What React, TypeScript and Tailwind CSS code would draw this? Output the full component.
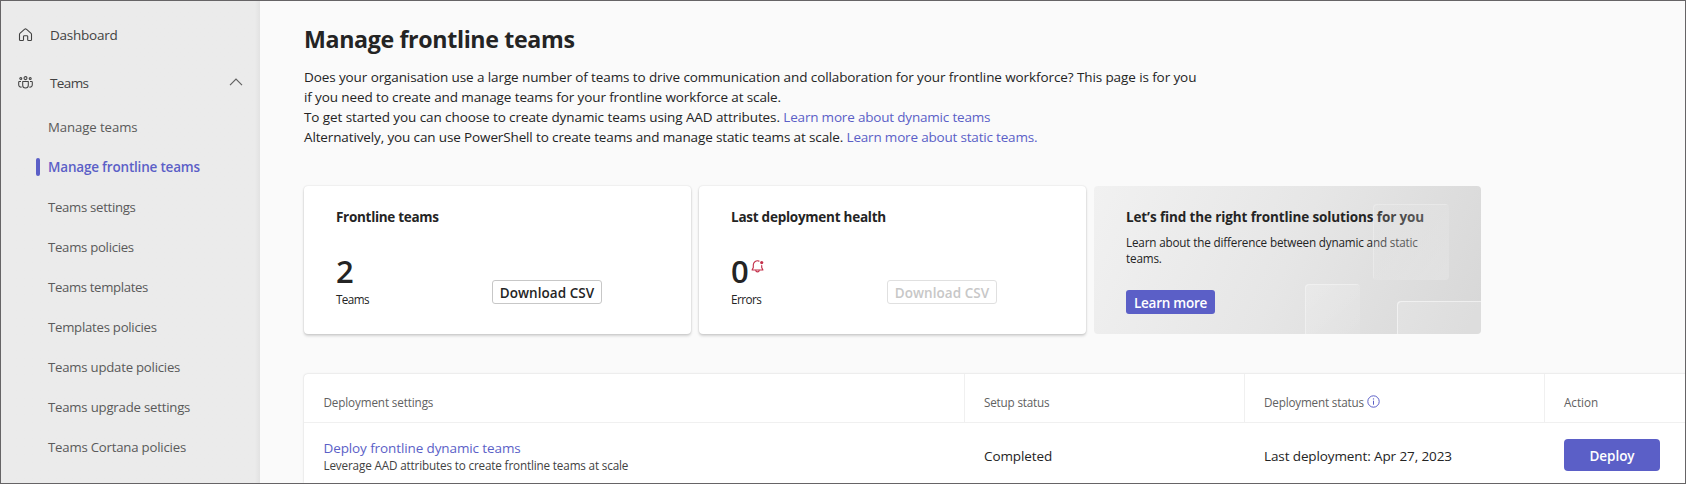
import React from 'react';

const navItems = [
  { label: 'Manage teams', tracking: 'tracking-[-0.09px]' },
  { label: 'Manage frontline teams', tracking: 'tracking-[-0.19px]', active: true },
  { label: 'Teams settings', tracking: 'tracking-[-0.31px]' },
  { label: 'Teams policies', tracking: 'tracking-[-0.29px]' },
  { label: 'Teams templates', tracking: 'tracking-[-0.36px]' },
  { label: 'Templates policies', tracking: 'tracking-[-0.26px]' },
  { label: 'Teams update policies', tracking: 'tracking-[-0.23px]' },
  { label: 'Teams upgrade settings', tracking: 'tracking-[-0.21px]' },
  { label: 'Teams Cortana policies', tracking: 'tracking-[-0.2px]' },
];

function HomeIcon() {
  return (
    <svg className="h-[15px] w-[15px] shrink-0" viewBox="0 0 15 15" fill="none" stroke="#424242" strokeWidth="1.1" strokeLinejoin="round">
      <path d="M1.9 5.4 6.7 1.2a1.1 1.1 0 0 1 1.6 0l4.8 4.2c.3.3.4.6.4 1v5.3c0 .5-.4.8-.8.8h-2.2c-.5 0-.8-.3-.8-.8V8.6c0-.5-.4-.9-.9-.9H6.4c-.5 0-.9.4-.9.9v3.1c0 .5-.3.8-.8.8H2.4c-.5 0-.9-.3-.9-.8V6.4c0-.4.1-.7.4-1Z" />
    </svg>
  );
}

function PeopleIcon() {
  return (
    <svg className="h-[14px] w-[15px] shrink-0" viewBox="0 0 15 14" fill="none" stroke="#424242" strokeWidth="1.05">
      <circle cx="7.5" cy="2.1" r="1.5" />
      <circle cx="2.8" cy="2.5" r="1" />
      <circle cx="12.2" cy="2.5" r="1" />
      <path d="M4.7 5.5h5.6v3.7a2.8 2.8 0 0 1-5.6 0Z" strokeLinejoin="round" />
      <path d="M3 5.5H1.4c-.4 0-.7.3-.7.7v2.6c0 1.5 1.1 2.5 2.9 2.3M12 5.5h1.6c.4 0 .7.3.7.7v2.6c0 1.5-1.1 2.5-2.9 2.3" />
    </svg>
  );
}

function BellIcon() {
  return (
    <svg className="h-[13px] w-[13px]" viewBox="0 0 13 13" fill="none" stroke="#c4314b" strokeWidth="1.15" strokeLinejoin="round" strokeLinecap="round">
      <path d="M8 1.1A4.1 4.1 0 0 0 2.3 4.8v2.6L1.1 10h10.8l-1.2-2.6V5.6" />
      <path d="M4.8 10.2a1.7 1.7 0 0 0 3.4 0" />
      <circle cx="10.7" cy="2.6" r="1.6" fill="#c4314b" stroke="none" />
    </svg>
  );
}

function Sidebar() {
  return (
    <nav className="flex w-[259px] shrink-0 flex-col bg-[#ebebeb] bg-linear-to-r from-[#ebebeb] from-98% to-[#e2e2e2] pt-[14px] text-[13.5px] text-[#424242]">
      <div className="flex h-10 items-center pl-[16.5px]">
        <HomeIcon />
        <span className="ml-[17.5px] tracking-[-0.25px]">Dashboard</span>
      </div>
      <div className="mt-2 flex h-10 items-center pr-[17px] pl-[16.5px]">
        <PeopleIcon />
        <span className="ml-[17.5px] tracking-[-0.6px]">Teams</span>
        <svg className="mb-[2px] ml-auto h-2 w-[14px]" viewBox="0 0 14 8" fill="none" stroke="#616161" strokeWidth="1.2">
          <path d="M1 7.2 7 1.2 13 7.2" />
        </svg>
      </div>
      <ul className="mt-1 flex flex-col">
        {navItems.map((item) => (
          <li key={item.label} className={`flex h-10 items-center pl-[35px] ${item.active ? '' : 'pt-[2px]'}`}>
            <span className={item.active ? 'h-[18px] w-1 rounded-[2px] bg-[#5b5fc7]' : 'w-1'} />
            <span
              className={`ml-[8px] ${item.tracking} ${item.active ? 'text-[13.5px] font-semibold text-[#5b5fc7]' : 'text-[13.2px] text-[#5a5a5a]'}`}
            >
              {item.label}
            </span>
          </li>
        ))}
      </ul>
    </nav>
  );
}

function StatCard(props: { title: React.ReactNode; value: string; label: React.ReactNode; icon?: React.ReactNode; disabled?: boolean }) {
  return (
    <section className="flex h-[148px] w-[387px] flex-col rounded-[4px] bg-white px-8 pt-[21px] shadow-[0_0_2px_rgba(0,0,0,0.14),0_2px_3px_rgba(0,0,0,0.16)]">
      <h2 className="text-[13.5px] leading-5 font-bold">{props.title}</h2>
      <div className="mt-[20px] flex">
        <div className="w-[156px]">
          <div className="flex h-10 gap-[2px]">
            <span className="text-[31px] leading-[49px] font-semibold">{props.value}</span>
            {props.icon && <span className="mt-[13px]">{props.icon}</span>}
          </div>
          <div className="mt-1 text-[11.7px] leading-4">{props.label}</div>
        </div>
        <button
          className={`mt-[33px] flex h-6 w-[110px] items-center justify-center rounded-[3px] border pt-[2px] text-[13.5px] leading-5 font-semibold tracking-[0.05px] ${props.disabled ? 'border-[#e0e0e0] text-[#c7c7c7]' : 'border-[#c7c7c7] text-[#242424]'}`}
        >
          Download CSV
        </button>
      </div>
    </section>
  );
}

function PromoCard() {
  return (
    <section className="relative flex h-[148px] w-[387px] flex-col items-start overflow-hidden rounded-[4px] bg-linear-[115deg] from-[#f1f1f1] via-[#e6e6e6] via-50% to-[#d7d7d7] px-8 pt-[21px]">
      <h2 className="text-[13.5px] leading-5 font-bold tracking-[-0.12px] whitespace-nowrap">Let’s find the right frontline solutions for you</h2>
      <p className="mt-[7px] w-[310px] text-[11.7px] leading-4 tracking-[-0.165px]">Learn about the difference between dynamic and static teams.</p>
      <button className="mt-[24px] flex h-6 w-[89px] items-center justify-center rounded-[3px] bg-[#5b5fc7] pt-[2px] text-[13.5px] leading-5 font-semibold tracking-[-0.26px] text-white">
        Learn more
      </button>
      <span className="absolute top-[18px] left-[279px] h-[76px] w-[76px] rounded-[4px] bg-linear-135 from-[#e8e8e8]/10 to-[#e8e8e8]/50 shadow-[inset_1px_1px_0_rgba(255,255,255,0.25)]" />
      <span className="absolute top-[98px] left-[211px] h-[60px] w-[55px] rounded-[4px] bg-linear-135 from-white/20 to-white/5 shadow-[inset_1px_1px_0_rgba(255,255,255,0.35)]" />
      <span className="absolute top-[115px] left-[303px] h-[60px] w-[100px] rounded-[4px] bg-white/15 shadow-[inset_1px_1px_0_rgba(255,255,255,0.5)]" />
    </section>
  );
}

function DeploymentTable() {
  return (
    <section className="mt-10 flex w-[1400px] grow flex-col rounded-tl-[4px] bg-white shadow-[0_0_2px_rgba(0,0,0,0.2)]">
      <div className="grid h-[49px] shrink-0 grid-cols-[661px_280px_300px_1fr] border-b border-[#f0f0f0] text-[11.7px] text-[#616161]">
        <div className="border-r border-[#f0f0f0] pt-[19px] pl-[19.5px] leading-[18px] tracking-[-0.13px]">Deployment settings</div>
        <div className="border-r border-[#f0f0f0] pt-[19px] pl-[19px] leading-[18px] tracking-[-0.18px]">Setup status</div>
        <div className="flex items-start border-r border-[#f0f0f0] pt-[19px] pl-[19px] leading-[18px] tracking-[-0.18px]">
          Deployment status
          <svg className="mt-[2px] ml-[3.5px] h-[13px] w-[13px]" viewBox="0 0 13 13" fill="none" stroke="#5b5fc7">
            <circle cx="6.5" cy="6.5" r="5.7" />
            <path d="M6.5 5.7v4" />
            <circle cx="6.5" cy="3.9" r=".7" fill="#5b5fc7" stroke="none" />
          </svg>
        </div>
        <div className="pt-[19px] pl-[19px] leading-[18px] tracking-[-0.05px]">Action</div>
      </div>
      <div className="grid grid-cols-[661px_280px_300px_1fr] text-[13.5px] leading-5">
        <div className="pt-[15px] pl-[19.5px]">
          <div className="tracking-[-0.11px] text-[#5b5fc7]">Deploy frontline dynamic teams</div>
          <div className="-mt-px text-[11.7px] leading-4 tracking-[-0.15px] text-[#424242]">Leverage AAD attributes to create frontline teams at scale</div>
        </div>
        <div className="pt-[23px] pl-[19px] tracking-[-0.11px]">Completed</div>
        <div className="pt-[23px] pl-[19px] tracking-[-0.11px]">Last deployment: Apr 27, 2023</div>
        <div className="pt-[16px] pl-[19px]">
          <button className="flex h-8 w-24 items-center justify-center rounded-[4px] bg-[#5b5fc7] pt-px font-semibold tracking-[-0.05px] text-white">Deploy</button>
        </div>
      </div>
    </section>
  );
}

export default function App() {
  return (
    <div className="flex h-[484px] w-[1686px] overflow-hidden border border-[#666466] bg-[#fafafa] font-['Open_Sans',sans-serif] text-[#242424]">
      <Sidebar />
      <main className="flex min-w-0 grow flex-col overflow-hidden pt-[22px] pl-[44px]">
        <h1 className="shrink-0 text-[23.2px] leading-8 font-bold tracking-[-0.35px]">Manage frontline teams</h1>
        <div className="mt-3 shrink-0 text-[13.5px] leading-5 whitespace-nowrap">
          <p className="tracking-[-0.1px]">
            Does your organisation use a large number of teams to drive communication and collaboration for your frontline workforce? This page is for you
          </p>
          <p className="tracking-[-0.115px]">if you need to create and manage teams for your frontline workforce at scale.</p>
          <p className="tracking-[-0.09px]">
            To get started you can choose to create dynamic teams using AAD attributes.{' '}
            <a className="tracking-[-0.19px] text-[#5b5fc7]">Learn more about dynamic teams</a>
          </p>
          <p className="tracking-[-0.13px]">
            Alternatively, you can use PowerShell to create teams and manage static teams at scale.{' '}
            <a className="tracking-[-0.19px] text-[#5b5fc7]">Learn more about static teams.</a>
          </p>
        </div>
        <div className="mt-[39px] flex shrink-0 gap-2">
          <StatCard title={<span className="tracking-[-0.3px]">Frontline teams</span>} value="2" label={<span className="tracking-[-0.6px]">Teams</span>} />
          <StatCard
            title={<span className="tracking-[-0.25px]">Last deployment health</span>}
            value="0"
            label={<span className="tracking-[-0.5px]">Errors</span>}
            icon={<BellIcon />}
            disabled
          />
          <PromoCard />
        </div>
        <DeploymentTable />
      </main>
    </div>
  );
}
